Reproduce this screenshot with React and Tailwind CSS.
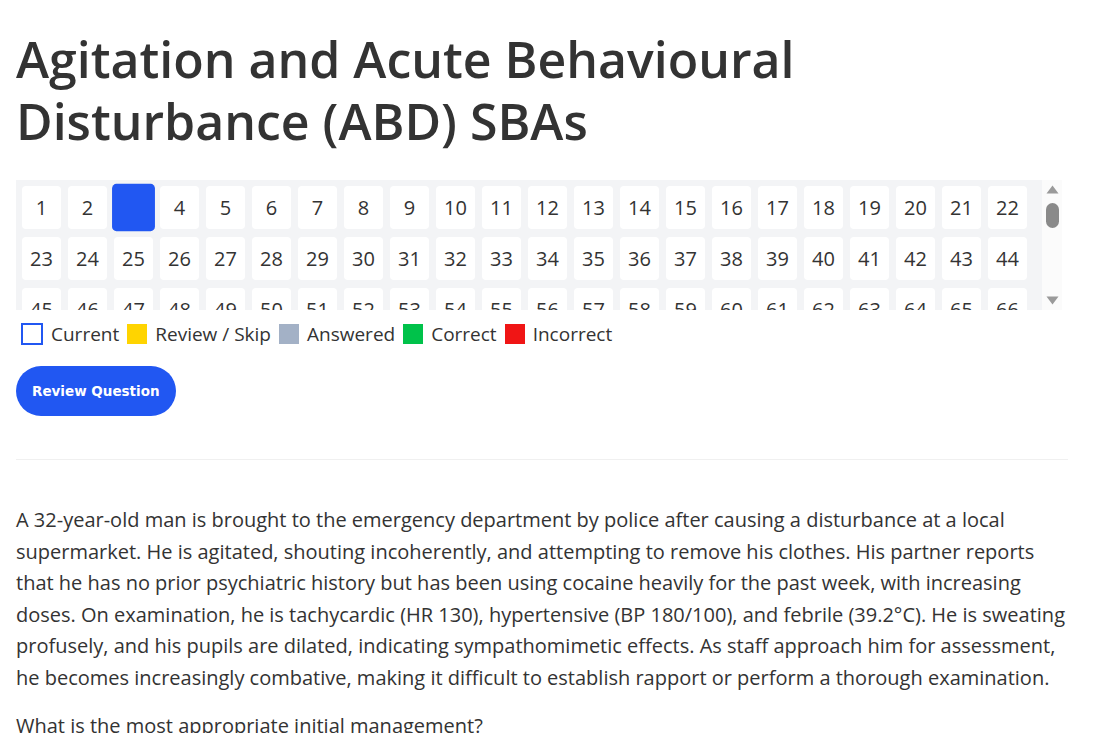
import React, { useState } from "react";

const TOTAL = 66;

const legend = [
  { label: "Current", box: "border-2 border-[#2157f2] bg-white w-[22px] h-[22px] ml-[5px]" },
  { label: "Review / Skip", box: "bg-[#ffd400] w-[20px] h-[20px]" },
  { label: "Answered", box: "bg-[#a3b1c6] w-[20px] h-[20px]" },
  { label: "Correct", box: "bg-[#00c24a] w-[20px] h-[20px]" },
  { label: "Incorrect", box: "bg-[#f01515] w-[20px] h-[20px]" },
];

// drawn scrollbar beside the number grid
const ScrollRail = () => (
  <div className="w-[20px] h-full bg-[#fbfbfb] flex flex-col items-center justify-between py-[5px]">
    <div className="flex flex-col items-center gap-[9px]">
      <svg width="13" height="9" viewBox="0 0 13 9">
        <path d="M6.5 0.5 L12.5 8.5 L0.5 8.5 Z" fill="#9a9a9a" />
      </svg>
      <div className="w-[13px] h-[25px] rounded-full bg-[#8a8a8a]" />
    </div>
    <svg width="13" height="9" viewBox="0 0 13 9">
      <path d="M0.5 0.5 L12.5 0.5 L6.5 8.5 Z" fill="#9a9a9a" />
    </svg>
  </div>
);

const QuestionGrid = ({ current, onPick }) => {
  const numbers = Array.from({ length: TOTAL }, (_, i) => i + 1);
  return (
    <div className="flex w-[1046px] h-[130px]">
      <div className="w-[1026px] h-full overflow-y-auto [scrollbar-width:none] bg-[#f3f4f6] p-[6px]">
        <div className="flex flex-wrap gap-x-[7px] gap-y-[8px]">
          {numbers.map((n) => (
            <button
              key={n}
              onClick={() => onPick(n)}
              className={`w-[39px] h-[43px] rounded-[4px] flex items-center justify-center text-[20px] ${
                n === current
                  ? "bg-[#2157f2] text-transparent scale-110"
                  : "bg-white text-[#333333]"
              }`}
            >
              {n}
            </button>
          ))}
        </div>
      </div>
      <ScrollRail />
    </div>
  );
};

export default function App() {
  const [current, setCurrent] = useState(3);

  return (
    <div
      className="bg-white min-h-screen pl-4 pr-8 pt-[28px] text-[#333333]"
      style={{ fontFamily: '"Open Sans", "Noto Sans", sans-serif' }}
    >
      <h1 className="text-[50px] leading-[62px] font-semibold mb-[28px]">
        Agitation and Acute Behavioural
        <br />
        Disturbance (ABD) SBAs
      </h1>

      <QuestionGrid current={current} onPick={setCurrent} />

      {/* Legend */}
      <div className="flex items-center gap-2 mt-[10px] text-[19px] leading-[28px]">
        {legend.map((item) => (
          <div key={item.label} className="flex items-center gap-2">
            <span className={`inline-block ${item.box}`} />
            <span>{item.label}</span>
          </div>
        ))}
      </div>

      <button
        className="mt-[18px] h-[50px] px-4 rounded-full bg-[#2157f2] text-white text-[13.5px] font-bold"
        style={{ fontFamily: '"DejaVu Sans", Verdana, sans-serif' }}
      >
        Review Question
      </button>

      <hr className="mt-[43px] border-t border-[#f0f0f0]" />

      <div className="mt-[44px] text-[20px] leading-[31.6px]">
        <p>
          A 32-year-old man is brought to the emergency department by police
          after causing a disturbance at a local supermarket. He is agitated,
          shouting incoherently, and attempting to remove his clothes. His
          partner reports that he has no prior psychiatric history but has been
          using cocaine heavily for the past week, with increasing doses. On
          examination, he is tachycardic (HR 130), hypertensive (BP 180/100),
          and febrile (39.2°C). He is sweating profusely, and his pupils are
          dilated, indicating sympathomimetic effects. As staff approach him for
          assessment, he becomes increasingly combative, making it difficult to
          establish rapport or perform a thorough examination.
        </p>
        <p className="mt-4">What is the most appropriate initial management?</p>
      </div>
    </div>
  );
}
